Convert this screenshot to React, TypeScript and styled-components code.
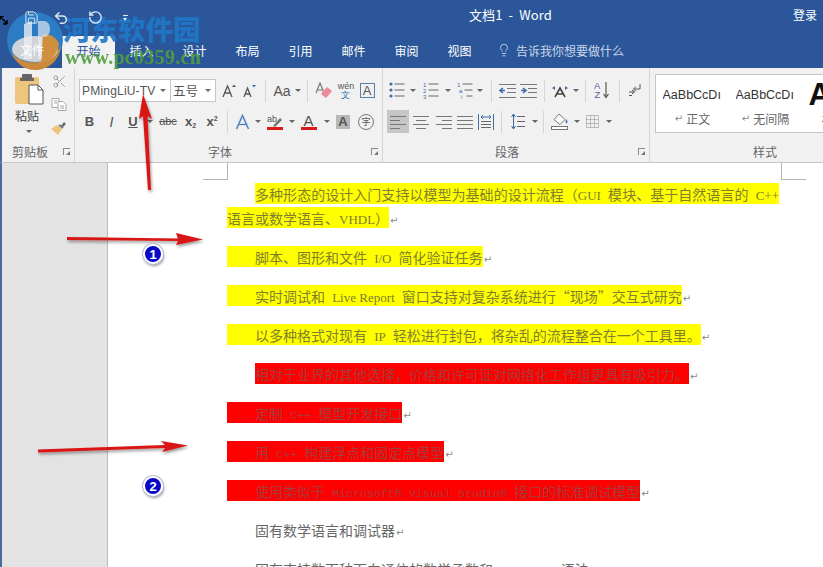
import styled, { createGlobalStyle } from "styled-components";
import { Lightbulb, RotateCcw, Save, Scissors, Undo2 } from "lucide-react";

const GlobalStyle = createGlobalStyle`
  html, body {
    margin: 0;
    padding: 0;
    background: #fff;
  }
  body {
    font-family: "Noto Sans CJK SC", "Liberation Sans", sans-serif;
  }
`;

const Window = styled.div`
  position: relative;
  width: 823px;
  height: 567px;
  overflow: hidden;
  display: flex;
  flex-direction: column;
`;

const TitleBar = styled.div`
  height: 30px;
  box-sizing: border-box;
  padding-bottom: 1px;
  background: #2b579a;
  color: #fff;
  display: flex;
  align-items: center;
  font-size: 13px;
`;

const Qat = styled.div`
  position: relative;
  z-index: 1;
  width: 469px;
  display: flex;
  align-items: center;
  padding: 6px 0 0 24px;
  box-sizing: border-box;
  color: #dfe7f2;
`;

const QatItem = styled.span<{ $w: number }>`
  width: ${(p) => p.$w}px;
  display: flex;
`;

const QatCaret = styled.span`
  width: 5px;
  height: 6px;
  margin-left: 1px;
  border-top: 1px solid #dfe7f2;
  box-sizing: border-box;
  display: flex;
  align-items: flex-end;
  &::after {
    content: "";
    border-left: 2.5px solid transparent;
    border-right: 2.5px solid transparent;
    border-top: 3px solid #dfe7f2;
  }
`;

const DocTitle = styled.div`
  flex: 1;
  letter-spacing: 0.1px;
  white-space: pre;
`;

const SignIn = styled.div`
  width: 30px;
  font-size: 12px;
`;

const TabBar = styled.div`
  height: 38px;
  background: #2b579a;
  display: flex;
  align-items: flex-end;
  padding-left: 62px;
`;

const Tab = styled.div<{ $active?: boolean }>`
  width: 53px;
  height: 32px;
  padding-bottom: 4px;
  box-sizing: border-box;
  display: flex;
  align-items: center;
  justify-content: center;
  font-size: 12px;
  color: ${(p) => (p.$active ? "#2b579a" : "#fff")};
  background: ${(p) => (p.$active ? "#f1f1f1" : "transparent")};
`;

const TellMe = styled.div`
  display: flex;
  align-items: center;
  gap: 5px;
  margin-left: 11px;
  height: 32px;
  padding-bottom: 4px;
  box-sizing: border-box;
  font-size: 12px;
  color: #c9d6e8;
`;

const Ribbon = styled.div`
  height: 95px;
  box-sizing: border-box;
  flex: none;
  display: flex;
  background: #f1f1f1;
  border-left: 2px solid #4a6a9c;
  border-bottom: 1px solid #c6c6c6;
`;

const Group = styled.div<{ $w?: number }>`
  width: ${(p) => (p.$w ? `${p.$w}px` : "auto")};
  flex: ${(p) => (p.$w ? "none" : "1")};
  box-sizing: border-box;
  display: flex;
  flex-direction: column;
  border-right: 1px solid #d6d6d6;
`;

const GroupBody = styled.div`
  flex: 1;
  display: flex;
  flex-direction: column;
  gap: 8px;
  padding: 11px 0 0 4px;
`;

const GroupLabel = styled.div<{ $left: number }>`
  height: 20px;
  box-sizing: border-box;
  padding-bottom: 2px;
  display: grid;
  grid-template-columns: ${(p) => p.$left}px auto 1fr;
  align-items: center;
  font-size: 12px;
  color: #666;
`;

const LabelText = styled.span`
  grid-column: 2;
`;

const Launcher = styled.span`
  grid-column: 3;
  justify-self: end;
  margin-right: 4px;
  width: 7px;
  height: 7px;
  box-sizing: border-box;
  border-left: 1px solid #8a8a8a;
  border-top: 1px solid #8a8a8a;
  position: relative;
  &::after {
    content: "";
    position: absolute;
    right: 0;
    bottom: 0;
    border-left: 4px solid transparent;
    border-bottom: 4px solid #777;
  }
`;

const ToolRow = styled.div`
  display: flex;
  align-items: center;
  height: 23px;
`;

const Tool = styled.div<{ $w: number; $active?: boolean }>`
  width: ${(p) => p.$w}px;
  height: 23px;
  flex: none;
  display: flex;
  align-items: center;
  justify-content: center;
  gap: 4px;
  color: #555;
  font-family: "Liberation Sans", sans-serif;
  background: ${(p) => (p.$active ? "#c6c6c6" : "transparent")};
`;

const Caret = styled.span`
  flex: none;
  border-left: 3px solid transparent;
  border-right: 3px solid transparent;
  border-top: 3px solid #666;
`;

const Separator = styled.div<{ $w: number }>`
  width: ${(p) => p.$w}px;
  flex: none;
  display: flex;
  justify-content: center;
  &::after {
    content: "";
    width: 1px;
    height: 22px;
    background: #d4d4d4;
  }
`;

const ComboBox = styled.div`
  width: 137px;
  height: 23px;
  box-sizing: border-box;
  flex: none;
  display: flex;
  background: #fff;
  border: 1px solid #c6c6c6;
  color: #555;
`;

const ComboPart = styled.div<{ $w: number; $first?: boolean }>`
  width: ${(p) => p.$w}px;
  box-sizing: border-box;
  display: flex;
  align-items: center;
  justify-content: space-between;
  padding: 0 4px 0 2px;
  font-size: 12.5px;
  border-right: ${(p) => (p.$first ? "1px solid #c6c6c6" : "none")};
`;

const FontName = styled.span`
  font-family: "Liberation Sans", sans-serif;
  font-size: 12px;
  white-space: nowrap;
  letter-spacing: 0.2px;
`;

const Letter = styled.span<{ $size?: number; $bold?: boolean; $italic?: boolean; $under?: boolean; $strike?: boolean; $color?: string }>`
  font-size: ${(p) => p.$size ?? 13}px;
  font-weight: ${(p) => (p.$bold ? 700 : 400)};
  font-style: ${(p) => (p.$italic ? "italic" : "normal")};
  text-decoration: ${(p) => (p.$under ? "underline" : p.$strike ? "line-through" : "none")};
  color: ${(p) => p.$color ?? "#555"};
  line-height: 1;
  white-space: nowrap;
`;

const Sub = styled.span`
  font-size: 7px;
  vertical-align: -2px;
`;

const Sup = styled.span`
  font-size: 7px;
  vertical-align: 5px;
`;

const UnderBar = styled.span`
  display: flex;
  flex-direction: column;
  align-items: center;
  line-height: 1;
  &::after {
    content: "";
    width: 16px;
    height: 3px;
    background: #d71a1a;
    margin-top: -1px;
  }
`;

const WenStack = styled.span`
  display: flex;
  flex-direction: column;
  align-items: center;
  font-size: 9px;
  line-height: 9px;
  color: #555;
`;

const WenBottom = styled.span`
  color: #2b6cb0;
  font-size: 9px;
`;

const BoxedLetter = styled.span`
  width: 15px;
  height: 15px;
  box-sizing: border-box;
  border: 1px solid #5b7ea6;
  display: flex;
  align-items: center;
  justify-content: center;
  font-size: 13px;
  color: #555;
`;

const ShadedLetter = styled.span`
  width: 14px;
  height: 14px;
  background: #b8b8b8;
  display: flex;
  align-items: center;
  justify-content: center;
  font-size: 13px;
  font-weight: 700;
  color: #555;
`;

const CircledLetter = styled.span`
  width: 16px;
  height: 16px;
  box-sizing: border-box;
  border: 1px solid #777;
  border-radius: 50%;
  display: flex;
  align-items: center;
  justify-content: center;
  font-family: "Noto Sans CJK SC", sans-serif;
  font-size: 9px;
  color: #555;
`;

const ClipboardBody = styled.div`
  flex: 1;
  display: flex;
  padding: 6px 0 0 5px;
`;

const PasteColumn = styled.div`
  width: 44px;
  display: flex;
  flex-direction: column;
  align-items: center;
  font-size: 12px;
  color: #444;
`;

const PasteText = styled.span`
  margin: 2px 4px 5px 0;
  line-height: 18px;
`;

const SmallColumn = styled.div`
  display: flex;
  flex-direction: column;
  align-items: center;
  gap: 9px;
  color: #9a9a9a;
`;

const StylesBody = styled.div`
  flex: 1;
  padding: 6px 0 0 5px;
`;

const Gallery = styled.div`
  height: 59px;
  box-sizing: border-box;
  display: flex;
  padding-top: 3px;
  background: #fff;
  border: 1px solid #c6c6c6;
  border-right: none;
  overflow: hidden;
`;

const GalleryItem = styled.div`
  width: 73px;
  flex: none;
  display: flex;
  flex-direction: column;
  align-items: center;
  overflow: hidden;
`;

const Sample = styled.div<{ $big?: boolean }>`
  height: 33px;
  width: 60px;
  overflow: hidden;
  display: flex;
  align-items: center;
  font-family: "Liberation Sans", sans-serif;
  font-size: ${(p) => (p.$big ? 31 : 12.5)}px;
  font-weight: ${(p) => (p.$big ? 700 : 400)};
  color: ${(p) => (p.$big ? "#111" : "#333")};
  white-space: nowrap;
`;

const SampleName = styled.div`
  display: flex;
  align-items: center;
  gap: 3px;
  font-size: 12px;
  line-height: 16px;
  color: #666;
  white-space: nowrap;
`;

const ReturnMark = styled.span`
  color: #888;
  font-size: 10px;
  font-family: "DejaVu Sans", sans-serif;
`;

const Workspace = styled.div`
  flex: 1;
  display: flex;
  min-height: 0;
  border-left: 2px solid #4a6a9c;
`;

const Gutter = styled.div`
  width: 105px;
  flex: none;
  background: #e3e3e3;
  border-right: 1px solid #bdbdbd;
`;

const Page = styled.div`
  flex: 1;
  position: relative;
  background: #fff;
  padding: 19px 44px 0 119px;
  overflow: hidden;
`;

const CropMark = styled.span<{ $side: "left" | "right" }>`
  position: absolute;
  top: 0;
  ${(p) => (p.$side === "left" ? "left: 95px;" : "left: 673px;")}
  width: 24px;
  height: 16px;
  border-bottom: 1px solid #b5b5b5;
  ${(p) => (p.$side === "left" ? "border-right" : "border-left")}: 1px solid #b5b5b5;
`;

const Para = styled.p`
  margin: 0 0 15px;
  font-size: 14px;
  line-height: 24px;
  word-spacing: 4px;
  text-spacing-trim: space-all;
  color: #666;
  text-align: justify;
`;

const Mark = styled.span<{ $tone: "yellow" | "red" }>`
  padding-top: 1px;
  background: linear-gradient(
      ${(p) => (p.$tone === "yellow" ? "#ffff00, #ffff00" : "#ff0000, #ff0000")}
    )
    no-repeat top / 100% 21px;
  color: ${(p) => (p.$tone === "yellow" ? "#80802e" : "#a83a3a")};
`;

const Indent = styled.span`
  display: inline-block;
  width: 28px;
  height: 1px;
`;

const Latin = styled.span`
  font-family: "Liberation Serif", serif;
  font-size: 13px;
  line-height: 0;
  word-spacing: 0;
`;

const Mono = styled.span`
  font-family: "Liberation Mono", monospace;
  font-size: 11.67px;
  line-height: 0;
  word-spacing: 0;
`;

const ParaEnd = styled.span`
  color: #888;
  font-size: 10px;
  font-family: "DejaVu Sans", sans-serif;
  line-height: 0;
  margin-left: 1px;
`;

const Annotations = styled.svg`
  position: absolute;
  left: 0;
  top: 0;
  pointer-events: none;
`;

const StepBadge = styled.div<{ $top: number }>`
  position: absolute;
  left: 143px;
  top: ${(p) => p.$top}px;
  width: 20px;
  height: 20px;
  box-sizing: border-box;
  border: 2px solid #fff;
  border-radius: 50%;
  background: #0808c8;
  box-shadow: 0 0 0 1px #b9bfd6, 1px 2px 3px rgba(0, 0, 0, 0.45);
  color: #fff;
  font-family: "Liberation Sans", sans-serif;
  font-size: 13px;
  font-weight: 700;
  display: flex;
  align-items: center;
  justify-content: center;
`;

const WatermarkLogo = styled.svg`
  position: absolute;
  left: 5px;
  top: 12px;
`;

const WatermarkName = styled.div`
  position: absolute;
  left: 63px;
  top: 8px;
  font-size: 27.5px;
  font-weight: 900;
  line-height: 40px;
  color: #1f78c8;
  opacity: 0.9;
  white-space: nowrap;
`;

const WatermarkUrl = styled.div`
  position: absolute;
  left: 65px;
  top: 47px;
  font-family: "Liberation Serif", serif;
  font-size: 20px;
  font-weight: 700;
  letter-spacing: 0.3px;
  line-height: 20px;
  color: #4f9e3c;
  opacity: 0.9;
  white-space: nowrap;
`;

const LogoFileText = styled.div`
  position: absolute;
  left: 20px;
  top: 41px;
  font-size: 12px;
  line-height: 18px;
  color: #fff;
`;

const CornerCursor = styled.svg`
  position: absolute;
  left: 0;
  top: 16px;
`;

function PasteIcon() {
  return (
    <svg width="30" height="31" viewBox="0 0 30 31">
      <rect x="1" y="3" width="24" height="27" rx="2" fill="#eec57c" />
      <rect x="8" y="0" width="10" height="6" rx="1" fill="#666" />
      <rect x="6" y="4" width="14" height="3" fill="#666" />
      <path d="M15 11h9l5 5v14H15z" fill="#fff" stroke="#555" />
      <path d="M24 11v5h5" fill="none" stroke="#555" />
    </svg>
  );
}

function CopyIcon() {
  return (
    <svg width="16" height="13" viewBox="0 0 16 13" fill="#fff" stroke="#a8a8a8">
      <path d="M1 .5h7v9H1z" />
      <path d="M7 3.5h5l3 3v6H7z" />
      <path d="M3 3h3M3 5h3M9 8h4M9 10h4" fill="none" />
    </svg>
  );
}

function BrushIcon() {
  return (
    <svg width="16" height="15" viewBox="0 0 16 15">
      <path d="M10 6l3-4 2 2-3 3z" fill="#666" />
      <path d="M0 9l6-4 5 4-4 6z" fill="#eec57c" />
      <path d="M8 5l4 3" stroke="#777" strokeWidth="2" />
    </svg>
  );
}

function GrowFont({ up }: { up: boolean }) {
  return (
    <svg width="15" height="14" viewBox="0 0 15 14" fill="none">
      <path d={up ? "M1 13L5.5 2 10 13M3 9h5" : "M1 13L4.5 4 8 13M2.5 10h4"} stroke="#555" strokeWidth="1.3" />
      <path d={up ? "M10 3l2-2.5L14 3z" : "M9 1l2 2.5L13 1z"} fill={up ? "#555" : "#3f6da8"} />
    </svg>
  );
}

function EraserIcon() {
  return (
    <svg width="18" height="17" viewBox="0 0 18 17" fill="none">
      <path d="M1 11L5 1l4 10M2.5 8h5" stroke="#777" strokeWidth="1.2" />
      <path d="M6 12l6-7 5 4-6 7z" fill="#ea8a96" />
    </svg>
  );
}

function GlowLetter() {
  return (
    <svg width="15" height="16" viewBox="0 0 15 16" fill="none">
      <path d="M1.5 15L7.5 1.5 13.5 15M4 10.5h7" stroke="#cfe0f2" strokeWidth="3" />
      <path d="M1.5 15L7.5 1.5 13.5 15M4 10.5h7" stroke="#4c7bb0" strokeWidth="1.2" />
    </svg>
  );
}

function HighlightIcon() {
  return (
    <svg width="16" height="17" viewBox="0 0 16 17">
      <text x="0" y="9" fontSize="9" fill="#555" fontFamily="Liberation Sans, sans-serif">
        ab
      </text>
      <path d="M6 13l7-8 2 2-7 7z" fill="#6b7a6b" />
      <rect x="0" y="14" width="16" height="3" fill="#d71a1a" />
    </svg>
  );
}

const listMarkers = {
  number: ["1", "2", "3"],
  multi: ["1", "a", "i"],
};

function ListIcon({ kind }: { kind: "bullet" | "number" | "multi" }) {
  const ys = [2, 8, 14];
  return (
    <svg width="16" height="17" viewBox="0 0 16 17">
      {ys.map((y, i) => {
        const shift = kind === "multi" ? i * 2 : 0;
        return (
          <g key={y}>
            {kind === "bullet" ? (
              <circle cx="2" cy={y} r="1.6" fill="#3f6da8" />
            ) : (
              <text x={shift} y={y + 2.5} fontSize="6" fill="#3f6da8" fontFamily="Liberation Sans, sans-serif">
                {listMarkers[kind][i]}
              </text>
            )}
            <path d={`M${5.5 + shift} ${y}h${10 - shift}`} stroke="#666" />
          </g>
        );
      })}
    </svg>
  );
}

function IndentIcon({ out }: { out: boolean }) {
  return (
    <svg width="17" height="14" viewBox="0 0 17 14">
      <path d="M0 .5h17M8 4.5h9M8 8.5h9M0 13.5h17" stroke="#777" />
      <path d={out ? "M6 6.5H2M4 4L1 6.5 4 9" : "M1 6.5h4M3 4l3 2.5L3 9"} stroke="#3f6da8" strokeWidth="1.6" fill="none" />
    </svg>
  );
}

function ChineseLayoutIcon() {
  return (
    <svg width="18" height="14" viewBox="0 0 18 14" fill="none">
      <path d="M4 13L9 4l5 9M6 10h6" stroke="#444" strokeWidth="1.6" />
      <path d="M1 4l3-2v4zM17 4l-3-2v4z" fill="#3f6da8" />
    </svg>
  );
}

function SortIcon() {
  return (
    <svg width="16" height="19" viewBox="0 0 16 19" fill="none">
      <text x="0" y="8" fontSize="9.5" fill="#6f4fa8" fontFamily="Liberation Sans, sans-serif">
        A
      </text>
      <text x="0.5" y="17" fontSize="9.5" fill="#6f4fa8" fontFamily="Liberation Sans, sans-serif">
        Z
      </text>
      <path d="M12 1v15M9.5 13l2.5 3.5 2.5-3.5" stroke="#555" strokeWidth="1.2" />
    </svg>
  );
}

function PilcrowIcon() {
  return (
    <svg width="13" height="15" viewBox="0 0 13 15" fill="none">
      <path d="M12 1v5H6M8 3.5L5.5 6 8 8.5" stroke="#555" />
      <path d="M1 9h5M4 7l2.5 2L4 11M1 12.5h3" stroke="#555" />
    </svg>
  );
}

function AlignIcon({ mode }: { mode: "left" | "center" | "right" | "full" }) {
  const rows = [16, 10, 16, 10].map((w, i) => {
    if (mode === "full") return `M0 ${2 + i * 4}.5h16`;
    if (mode === "left") return `M0 ${2 + i * 4}.5h${w}`;
    if (mode === "right") return `M${16 - w} ${2 + i * 4}.5h${w}`;
    return `M${(16 - w) / 2} ${2 + i * 4}.5h${w}`;
  });
  return (
    <svg width="16" height="16" viewBox="0 0 16 16">
      {rows.map((d) => (
        <path key={d} d={d} stroke="#777" />
      ))}
    </svg>
  );
}

function DistributeIcon() {
  return (
    <svg width="16" height="16" viewBox="0 0 16 16" fill="none">
      <path d="M.5 0v16M15.5 0v16" stroke="#3f6da8" />
      <path d="M3 3h10M5 1L3 3l2 2M11 1l2 2-2 2" stroke="#3f6da8" />
      <path d="M3 7.5h10M3 10.5h10M3 13.5h10" stroke="#666" />
    </svg>
  );
}

function LineSpacingIcon() {
  return (
    <svg width="14" height="17" viewBox="0 0 14 17" fill="none">
      <path d="M2.5 1v15M.5 4l2-3 2 3M.5 13l2 3 2-3" stroke="#3f6da8" />
      <path d="M6 3.5h8M6 8.5h8M6 13.5h8" stroke="#666" />
    </svg>
  );
}

function FillIcon() {
  return (
    <svg width="18" height="17" viewBox="0 0 18 17" fill="none">
      <path d="M8 1l6 5.5-5 5-6-5z" stroke="#777" fill="#fff" />
      <path d="M15 6c1.5 2 2 3 1 4s-2-1-1-4z" fill="#3f6da8" />
      <rect x=".5" y="13.5" width="16" height="3" fill="#fff" stroke="#777" />
    </svg>
  );
}

function BordersIcon() {
  return (
    <svg width="13" height="13" viewBox="0 0 13 13" fill="none">
      <path d="M.5.5h12v12H.5zM4.5.5v12M8.5.5v12M.5 4.5h12M.5 8.5h12" stroke="#888" strokeDasharray="1 1" />
    </svg>
  );
}

function Arrows() {
  return (
    <Annotations width="823" height="567" viewBox="0 0 823 567">
      <defs>
        <filter id="arrowShadow" x="-20%" y="-60%" width="140%" height="220%">
          <feDropShadow dx="1" dy="2" stdDeviation="1.5" floodColor="#000" floodOpacity="0.4" />
        </filter>
      </defs>
      <g fill="#d91515" filter="url(#arrowShadow)">
        <path d="M67 237L178 238.5 176 233 203 239.5 176 245 178 241 67 240z" />
        <path d="M38 449.5L165 445 161 441 188 445.5 162 452 165 448 38 452.5z" />
        <path d="M143 94L152 119 147.5 116 151 190 148 190 143 116 139 119z" />
      </g>
    </Annotations>
  );
}

const tabs = ["开始", "插入", "设计", "布局", "引用", "邮件", "审阅", "视图"];

export default function App() {
  return (
    <Window>
      <GlobalStyle />
      <TitleBar>
        <Qat>
          <QatItem $w={29}>
            <Save size={15} strokeWidth={1.6} />
          </QatItem>
          <QatItem $w={35}>
            <Undo2 size={16} strokeWidth={2.2} />
          </QatItem>
          <QatItem $w={34}>
            <RotateCcw size={15} strokeWidth={2.2} />
          </QatItem>
          <QatCaret />
        </Qat>
        <DocTitle>文档1  -  Word</DocTitle>
        <SignIn>登录</SignIn>
      </TitleBar>

      <TabBar>
        {tabs.map((t) => (
          <Tab key={t} $active={t === "开始"}>
            {t}
          </Tab>
        ))}
        <TellMe>
          <Lightbulb size={14} strokeWidth={1.5} />
          告诉我你想要做什么
        </TellMe>
      </TabBar>

      <Ribbon>
        <Group $w={73}>
          <ClipboardBody>
            <PasteColumn>
              <PasteIcon />
              <PasteText>粘贴</PasteText>
              <Caret />
            </PasteColumn>
            <SmallColumn>
              <Scissors size={15} strokeWidth={1.5} />
              <CopyIcon />
              <BrushIcon />
            </SmallColumn>
          </ClipboardBody>
          <GroupLabel $left={10}>
            <LabelText>剪贴板</LabelText>
            <Launcher />
          </GroupLabel>
        </Group>

        <Group $w={308}>
          <GroupBody>
            <ToolRow>
              <ComboBox>
                <ComboPart $w={91} $first>
                  <FontName>PMingLiU-TV</FontName>
                  <Caret />
                </ComboPart>
                <ComboPart $w={44}>
                  五号
                  <Caret />
                </ComboPart>
              </ComboBox>
              <Tool $w={27}>
                <GrowFont up />
              </Tool>
              <Tool $w={15}>
                <GrowFont up={false} />
              </Tool>
              <Separator $w={14} />
              <Tool $w={30}>
                <Letter $size={14}>Aa</Letter>
                <Caret />
              </Tool>
              <Separator $w={10} />
              <Tool $w={23}>
                <EraserIcon />
              </Tool>
              <Tool $w={22}>
                <WenStack>
                  wén
                  <WenBottom>文</WenBottom>
                </WenStack>
              </Tool>
              <Tool $w={20}>
                <BoxedLetter>A</BoxedLetter>
              </Tool>
            </ToolRow>
            <ToolRow>
              <Tool $w={21}>
                <Letter $bold>B</Letter>
              </Tool>
              <Tool $w={23}>
                <Letter $italic $size={14}>I</Letter>
              </Tool>
              <Tool $w={20}>
                <Letter $bold $under>U</Letter>
              </Tool>
              <Tool $w={13}>
                <Caret />
              </Tool>
              <Tool $w={24}>
                <Letter $strike $size={11}>abc</Letter>
              </Tool>
              <Tool $w={21}>
                <Letter $bold>
                  x<Sub>2</Sub>
                </Letter>
              </Tool>
              <Tool $w={22}>
                <Letter $bold>
                  x<Sup>2</Sup>
                </Letter>
              </Tool>
              <Separator $w={8} />
              <Tool $w={23}>
                <GlowLetter />
              </Tool>
              <Tool $w={8}>
                <Caret />
              </Tool>
              <Tool $w={26}>
                <HighlightIcon />
              </Tool>
              <Tool $w={7}>
                <Caret />
              </Tool>
              <Tool $w={27}>
                <UnderBar>
                  <Letter $size={15}>A</Letter>
                </UnderBar>
              </Tool>
              <Tool $w={9}>
                <Caret />
              </Tool>
              <Tool $w={24}>
                <ShadedLetter>A</ShadedLetter>
              </Tool>
              <Tool $w={22}>
                <CircledLetter>字</CircledLetter>
              </Tool>
            </ToolRow>
          </GroupBody>
          <GroupLabel $left={133}>
            <LabelText>字体</LabelText>
            <Launcher />
          </GroupLabel>
        </Group>

        <Group $w={267}>
          <GroupBody>
            <ToolRow>
              <Tool $w={20}>
                <ListIcon kind="bullet" />
              </Tool>
              <Tool $w={12}>
                <Caret />
              </Tool>
              <Tool $w={24}>
                <ListIcon kind="number" />
              </Tool>
              <Tool $w={10}>
                <Caret />
              </Tool>
              <Tool $w={23}>
                <ListIcon kind="multi" />
              </Tool>
              <Tool $w={8}>
                <Caret />
              </Tool>
              <Separator $w={14} />
              <Tool $w={19}>
                <IndentIcon out />
              </Tool>
              <Tool $w={23}>
                <IndentIcon out={false} />
              </Tool>
              <Separator $w={8} />
              <Tool $w={24}>
                <ChineseLayoutIcon />
              </Tool>
              <Tool $w={8}>
                <Caret />
              </Tool>
              <Separator $w={10} />
              <Tool $w={24}>
                <SortIcon />
              </Tool>
              <Separator $w={10} />
              <Tool $w={20}>
                <PilcrowIcon />
              </Tool>
            </ToolRow>
            <ToolRow>
              <Tool $w={22} $active>
                <AlignIcon mode="left" />
              </Tool>
              <Tool $w={24}>
                <AlignIcon mode="center" />
              </Tool>
              <Tool $w={22}>
                <AlignIcon mode="right" />
              </Tool>
              <Tool $w={20}>
                <AlignIcon mode="full" />
              </Tool>
              <Tool $w={22}>
                <DistributeIcon />
              </Tool>
              <Separator $w={8} />
              <Tool $w={26}>
                <LineSpacingIcon />
              </Tool>
              <Tool $w={8}>
                <Caret />
              </Tool>
              <Separator $w={8} />
              <Tool $w={26}>
                <FillIcon />
              </Tool>
              <Tool $w={7}>
                <Caret />
              </Tool>
              <Tool $w={25}>
                <BordersIcon />
              </Tool>
              <Tool $w={8}>
                <Caret />
              </Tool>
            </ToolRow>
          </GroupBody>
          <GroupLabel $left={112}>
            <LabelText>段落</LabelText>
            <Launcher />
          </GroupLabel>
        </Group>

        <Group>
          <StylesBody>
            <Gallery>
              <GalleryItem>
                <Sample>AaBbCcDı</Sample>
                <SampleName>
                  <ReturnMark>↵</ReturnMark>正文
                </SampleName>
              </GalleryItem>
              <GalleryItem>
                <Sample>AaBbCcDı</Sample>
                <SampleName>
                  <ReturnMark>↵</ReturnMark>无间隔
                </SampleName>
              </GalleryItem>
              <GalleryItem>
                <Sample $big>A</Sample>
                <SampleName>标题 1</SampleName>
              </GalleryItem>
            </Gallery>
          </StylesBody>
          <GroupLabel $left={103}>
            <LabelText>样式</LabelText>
          </GroupLabel>
        </Group>
      </Ribbon>

      <Workspace>
        <Gutter />
        <Page>
          <CropMark $side="left" />
          <CropMark $side="right" />
          <Para>
            <Indent />
            <Mark $tone="yellow">
              多种形态的设计入门支持以模型为基础的设计流程（<Latin>GUI</Latin> 模块、基于自然语言的 <Latin>C++</Latin> 语言或数学语言、<Latin>VHDL</Latin>）
            </Mark>
            <ParaEnd>↵</ParaEnd>
          </Para>
          <Para>
            <Mark $tone="yellow">
              <Indent />
              脚本、图形和文件 <Latin>I/O</Latin> 简化验证任务
            </Mark>
            <ParaEnd>↵</ParaEnd>
          </Para>
          <Para>
            <Mark $tone="yellow">
              <Indent />
              实时调试和 <Latin>Live Report</Latin> 窗口支持对复杂系统进行“现场”交互式研究
            </Mark>
            <ParaEnd>↵</ParaEnd>
          </Para>
          <Para>
            <Mark $tone="yellow">
              <Indent />
              以多种格式对现有 <Latin>IP</Latin> 轻松进行封包，将杂乱的流程整合在一个工具里。
            </Mark>
            <ParaEnd>↵</ParaEnd>
          </Para>
          <Para>
            <Indent />
            <Mark $tone="red">相对于业界的其他选择，价格和许可证对网络化工作组更具有吸引力。</Mark>
            <ParaEnd>↵</ParaEnd>
          </Para>
          <Para>
            <Mark $tone="red">
              <Indent />
              定制 <Mono>C++</Mono> 模型开发接口
            </Mark>
            <ParaEnd>↵</ParaEnd>
          </Para>
          <Para>
            <Mark $tone="red">
              <Indent />
              用 <Mono>C++</Mono> 构建浮点和固定点模型
            </Mark>
            <ParaEnd>↵</ParaEnd>
          </Para>
          <Para>
            <Mark $tone="red">
              <Indent />
              使用类似于 <Mono>Microsoft® Visual Studio®</Mono> 接口的标准调试模型
            </Mark>
            <ParaEnd>↵</ParaEnd>
          </Para>
          <Para>
            <Indent />
            固有数学语言和调试器
            <ParaEnd>↵</ParaEnd>
          </Para>
          <Para>
            <Indent />
            固有支持数百种面向通信的数学函数和 <Latin>MATLAB</Latin> 语法
          </Para>
        </Page>
      </Workspace>

      <WatermarkLogo width="60" height="58" viewBox="0 0 60 58">
        <circle cx="30" cy="28" r="28" fill="#2b7fc9" opacity="0.92" />
        <path d="M6 40c10 14 38 16 50-6-2 16-14 24-26 24S10 50 6 40z" fill="#c98a3c" />
        <ellipse cx="30" cy="37" rx="23" ry="13" fill="#cfd3d8" />
        <path d="M38 22c8 0 14 4 16 10-1 9-8 17-18 19z" fill="#d08f3e" />
        <path d="M19 12l8-3v38h-8z" fill="#e8edf2" opacity="0.8" />
        <path d="M33 9h6c8 0 8 16 0 16h-2v22h-4z" fill="#e8edf2" opacity="0.65" />
      </WatermarkLogo>
      <LogoFileText>文件</LogoFileText>
      <WatermarkName>河东软件园</WatermarkName>
      <WatermarkUrl>www.pc0359.cn</WatermarkUrl>
      <CornerCursor width="8" height="9" viewBox="0 0 8 9">
        <path d="M0 0l7 8M0 0v4M0 0h4M7 8V4M7 8H3" stroke="#000" strokeWidth="1.4" fill="none" />
      </CornerCursor>

      <Arrows />
      <StepBadge $top={244}>1</StepBadge>
      <StepBadge $top={476}>2</StepBadge>
    </Window>
  );
}
